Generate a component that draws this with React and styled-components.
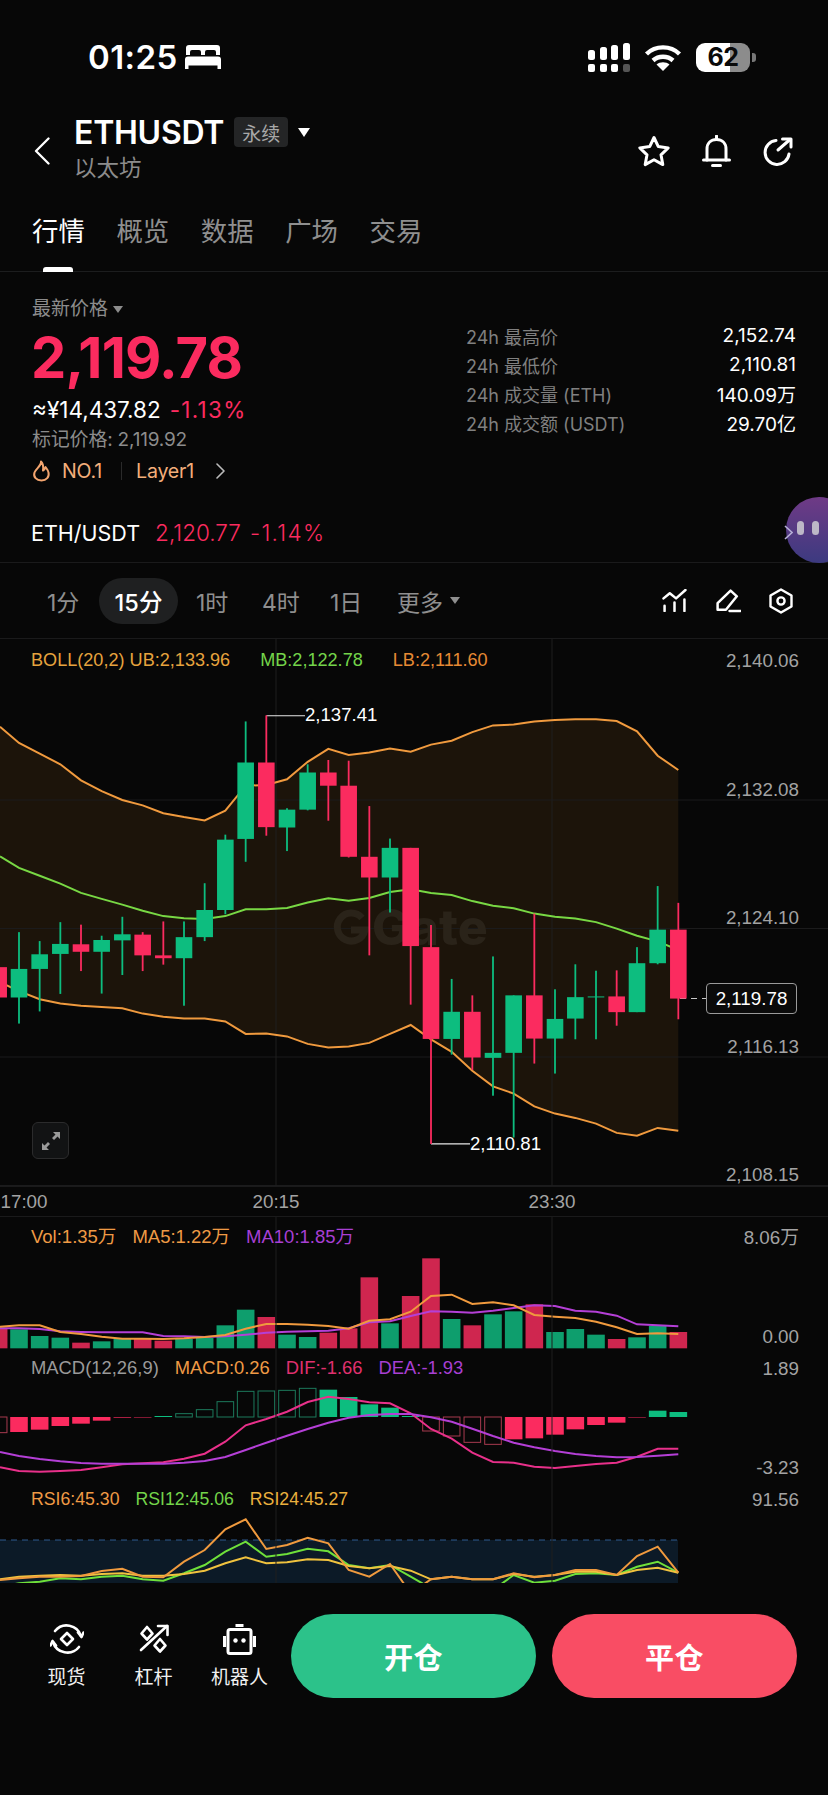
import React from 'react';
import styled, { createGlobalStyle } from 'styled-components';

const UI = `Inter, "Noto Sans CJK SC", sans-serif`;
const CHART = `"Liberation Sans", "Noto Sans CJK SC", sans-serif`;
const RED = '#fb2b5f';
const GREEN = '#0dbd7f';

const Global = createGlobalStyle`
  html, body { margin: 0; padding: 0; background: #070707; }
  * { box-sizing: border-box; }
`;

const Page = styled.div`
  width: 828px; height: 1795px; overflow: hidden; background: #070707; color: #fff;
  font-family: ${UI}; display: flex; flex-direction: column;
`;
const StatusBar = styled.div`
  height: 100px; flex: none; padding: 42px 78px 0 88px;
  display: flex; align-items: flex-start; justify-content: space-between;
`;
const StatusGroup = styled.div`display: flex; align-items: center; gap: ${p => p.$gap}px; height: 30px;`;
const Clock = styled.span`font-size: 33px; font-weight: 600; letter-spacing: 0.4px; line-height: 30px;`;

const NavBar = styled.div`
  height: 100px; flex: none; padding: 0 35px 0 34px; display: flex; align-items: center; gap: 24px;
`;
const BackIcon = styled.svg`width: 16px; height: 28px; flex: none; margin-top: 1px;`;
const TitleBlock = styled.div`flex: 1; display: flex; flex-direction: column; gap: 6px; margin-top: -2px;`;
const TitleRow = styled.div`display: flex; align-items: center; gap: 10px; height: 32px;`;
const Symbol = styled.span`font-size: 32px; font-weight: 600; letter-spacing: -0.25px;`;
const Badge = styled.span`
  width: 54px; height: 30px; background: #242526; border-radius: 4px; color: #a8a8a8;
  font-size: 19px; display: flex; align-items: center; justify-content: center;
`;
const Caret = styled.i`
  width: 0; height: 0; display: block; flex: none;
  border-left: ${p => p.$w / 2}px solid transparent; border-right: ${p => p.$w / 2}px solid transparent;
  border-top: ${p => p.$h}px solid ${p => p.$c};
`;
const Sub = styled.span`font-size: 22.5px; color: #8c8c8c; line-height: 28px;`;
const NavIcons = styled.div`display: flex; align-items: center; gap: 31px; margin-top: 2px;`;

const Tabs = styled.div`
  height: 72px; flex: none; padding: 0 0 0 32px; display: flex; gap: 32.4px; align-items: flex-start;
  border-bottom: 1px solid #1c1d1e;
`;
const Tab = styled.div`
  position: relative; width: 52px; height: 71px; padding-top: 14px; font-size: 26.4px; line-height: 34px;
  color: ${p => (p.$on ? '#fff' : '#8f8f8f')}; white-space: nowrap;
  ${p => p.$on && `&::after { content: ''; position: absolute; left: 11px; bottom: -1px; width: 30px; height: 5px; border-radius: 3px 3px 0 0; background: #fff; }`}
`;

const Summary = styled.div`
  height: 218px; flex: none; padding: 0 32px 0 32px; display: flex; justify-content: space-between;
`;
const PriceCol = styled.div`display: flex; flex-direction: column; padding-top: 24px;`;
const LastLabel = styled.div`
  display: flex; align-items: center; gap: 5px; font-size: 19px; line-height: 26px; color: #8c8c8c;
`;
const BigPrice = styled.div`
  font-size: 56px; font-weight: 700; line-height: 62px; margin-top: 5px; color: ${RED}; letter-spacing: -0.8px; margin-left: -1px;
`;
const FiatRow = styled.div`
  display: flex; gap: 9px; font-size: 22.5px; line-height: 26px; margin-top: 8px;
`;
const Pct = styled.span`color: ${RED}; letter-spacing: 1.3px; font-weight: ${p => p.$w || 400};`;
const MarkPrice = styled.div`font-size: 19px; line-height: 24px; color: #8c8c8c; margin-top: 5px; letter-spacing: -0.2px;`;
const TagRow = styled.div`
  display: flex; align-items: center; font-size: 19.6px; line-height: 24px; margin-top: 7px; color: #f3ae7a; letter-spacing: -0.2px;
`;
const TagIconGap = styled.span`margin-left: 11px;`;
const TagChevron = styled.span`margin-left: 22px; display: flex;`;
const Divider = styled.i`width: 1px; height: 18px; background: #2a2a2a; margin: 0 14px 0 19px;`;
const Stats = styled.div`width: 330px; padding-top: 49px; display: flex; flex-direction: column;`;
const StatRow = styled.div`
  display: flex; justify-content: space-between; height: 29px; align-items: center; font-size: 19px;
`;
const StatLabel = styled.span`color: #808080; font-size: 18px;`;

const PairRow = styled.div`
  position: relative; height: 73px; flex: none; padding: 13px 31px 0; display: flex; align-items: center; gap: 15px;
  font-size: 21.5px; border-bottom: 1px solid #1a1a1b;
`;
const PairLoss = styled.div`display: flex; gap: 9px; color: ${RED}; font-weight: 300; font-size: 22.5px;`;
const Assist = styled.div`
  position: absolute; left: 786px; top: 7px; width: 66px; height: 66px; border-radius: 50%;
  background: linear-gradient(180deg, #6f3a86 0%, #3c3a80 100%);
  display: flex; gap: 8px; padding: 24px 0 0 11px;
`;
const AssistDot = styled.i`width: 7px; height: 14px; border-radius: 4px; background: #bdb7c7;`;
const AssistChevron = styled.svg`position: absolute; left: 784px; top: 35px; width: 9px; height: 15px;`;

const Intervals = styled.div`
  height: 76px; flex: none; padding: 0 35px 0 47px; display: flex; align-items: center; border-bottom: 1px solid #1a1a1b;
`;
const Interval = styled.div`
  font-size: 23px; color: ${p => (p.$on ? '#fff' : '#8f8f8f')}; width: ${p => p.$w}px; height: 46px; flex: none;
  display: flex; align-items: center; gap: 7px;
  justify-content: ${p => (p.$on ? 'center' : 'flex-start')};
  ${p => p.$on && `background: #1f2021; border-radius: 23px; font-weight: 500; margin-right: 18px; font-size: 23.5px;`}
`;
const ToolIcons = styled.div`margin-left: auto; display: flex; align-items: center; gap: 28px;`;

const Pane = styled.div`position: relative; height: ${p => p.$h}px; flex: none; overflow: hidden;`;
const Canvas = styled.svg`position: absolute; left: 0; top: 0; display: block;`;
const Legend = styled.div`
  position: relative; display: flex; gap: ${p => p.$gap}px; padding: ${p => p.$top}px 0 0 31px;
  font-family: ${CHART}; font-size: ${p => p.$size}px; line-height: 22px; white-space: nowrap;
`;
const LegendItem = styled.span`color: ${p => p.$c};`;
const AxisColumn = styled.div`
  position: absolute; right: 29px; top: ${p => p.$top}px; bottom: ${p => p.$bottom}px;
  display: flex; flex-direction: column; justify-content: space-between; align-items: flex-end;
  font-family: ${CHART}; font-size: 18.8px; line-height: 22px; color: #a3a3a3;
`;
const Callout = styled.span`
  position: absolute; left: ${p => p.$x}px; top: ${p => p.$y}px; font-family: ${CHART}; font-size: 18.6px; line-height: 22px; color: #fff;
`;
const PriceTag = styled.div`
  position: absolute; left: 706px; top: 344px; width: 91px; height: 31px; border: 1px solid #9a9a9a; border-radius: 4px;
  background: #0a0a0a; font-family: ${CHART}; font-size: 18.8px; display: flex; align-items: center; justify-content: center;
`;
const ExpandBtn = styled.div`
  position: absolute; left: 32px; top: 483px; width: 37px; height: 37px; border: 1.5px solid #2b2b2c; border-radius: 6px;
  background: #121314; display: flex; align-items: center; justify-content: center;
`;
const TimeAxis = styled.div`
  position: relative; height: 31px; flex: none; border-top: 1px solid #1a1a1b; border-bottom: 1px solid #1a1a1b;
  font-family: ${CHART}; font-size: 18.8px; color: #a3a3a3;
`;
const Tick = styled.span`position: absolute; left: ${p => p.$x}px; top: 4px; line-height: 22px; transform: translateX(-50%);`;

const Footer = styled.div`
  flex: none; height: 212px; padding: 31px 32px 0 0; display: flex; align-items: flex-start; background: #070707; position: relative;
`;
const Shortcut = styled.div`
  width: ${p => p.$w}px; margin-left: ${p => p.$ml}px; flex: none; display: flex; flex-direction: column; align-items: center;
  font-size: 19px; color: #f0f0f0; white-space: nowrap;
`;
const ShortcutIcon = styled.div`height: 50px; display: flex; align-items: center; justify-content: center; margin-bottom: -2px;`;
const Action = styled.div`
  width: ${p => p.$w}px; height: 84px; flex: none; margin-left: ${p => p.$ml}px; border-radius: 42px; background: ${p => p.$bg};
  color: #fff; font-size: 29px; font-weight: 700; display: flex; align-items: center; justify-content: center; letter-spacing: 0.5px;
`;

/* chart data in measured crop units */
const XS = [57,119,181,243,305,367,428,490,552,614,676,737,799,861,923,985,1046,1108,1170,1232,1293,1355,1417,1479,1541,1603,1665,1726,1788,1850,1911,1973,2035];
const CANDLES = [
  [-4,'r',888,973,888,973],[57,'g',893,973,790,1046],[119,'g',852,893,815,1012],[181,'g',823,851,762,963],[243,'r',824,845,769,899],
  [305,'g',812,845,800,962],[367,'g',796,813,747,910],[428,'r',797,855,790,899],[490,'r',855,863,760,881],[552,'g',804,863,760,996],
  [614,'g',728,804,653,815],[676,'g',531,728,517,740],[737,'g',315,529,200,593],[799,'r',315,496,183,520],[861,'g',447,497,443,563],
  [923,'g',343,447,320,449],[985,'r',343,380,308,478],[1046,'r',380,579,310,581],[1108,'r',579,637,437,855],[1170,'g',554,637,528,735],
  [1232,'r',554,829,554,993],[1293,'r',832,1089,770,1383],[1355,'g',1013,1089,921,1133],[1417,'r',1013,1141,967,1176],[1479,'g',1128,1142,858,1248],
  [1541,'g',967,1128,967,1365],[1603,'r',967,1088,738,1158],[1665,'g',1033,1088,950,1186],[1726,'g',972,1032,880,1090],[1788,'g',970,972,898,1090],
  [1850,'r',970,1014,897,1052],[1911,'g',877,1014,832,1014],[1973,'g',783,877,661,880],[2035,'r',783,976,708,1034],
];
const UB = [215,260,290,320,365,395,420,435,457,468,477,450,380,378,362,313,277,294,287,276,285,265,254,230,211,209,200,196,194,194,199,228,296,336];
const MB = [578,610,632,654,680,697,713,730,745,751,753,745,726,726,722,707,695,702,694,678,670,680,686,703,716,723,738,747,752,762,780,800,816,840];
const LB = [930,955,978,990,996,1000,1003,1018,1027,1032,1032,1040,1075,1074,1082,1103,1113,1110,1100,1075,1050,1090,1125,1178,1222,1242,1278,1298,1310,1326,1352,1360,1338,1346];
const LX = [0, ...XS];

const VOL = [[-4,'r',385],[57,'g',388],[119,'g',408],[181,'g',413],[243,'r',428],[305,'g',424],[367,'g',417],[428,'r',415],[490,'r',422],[552,'g',417],[614,'g',414],[676,'g',376],[737,'g',329],[799,'r',351],[861,'g',404],[923,'g',411],[985,'r',398],[1046,'r',385],[1108,'r',232],[1170,'g',370],[1232,'r',288],[1293,'r',175],[1355,'g',357],[1417,'r',376],[1479,'g',343],[1541,'g',334],[1603,'r',313],[1665,'g',396],[1726,'g',387],[1788,'g',404],[1850,'r',417],[1911,'g',412],[1973,'g',378],[2035,'r',396]];
const MA5 = [380,376,376,396,402,410,416,416,417,415,411,405,386,372,372,374,378,386,362,358,335,288,284,312,307,316,345,350,354,365,382,402,400,402];
const MA10 = [385,385,387,394,396,397,397,397,408,409,411,409,404,398,395,394,392,385,367,364,348,334,335,338,332,324,316,318,332,335,347,373,376,379];

const MACD = [[-4,'ro',698],[57,'r',696],[119,'r',689],[181,'r',678],[243,'r',671],[305,'r',662],[367,'r',653],[428,'r',652],[490,'g',648],[552,'go',641],[614,'go',629],[676,'go',605],[737,'go',574],[799,'go',573],[861,'go',571],[923,'go',565],[985,'g',569],[1046,'g',591],[1108,'g',613],[1170,'g',623],[1232,'g',648],[1293,'ro',693],[1355,'ro',708],[1417,'ro',727],[1479,'ro',733],[1541,'r',718],[1603,'r',715],[1665,'r',704],[1726,'r',688],[1788,'r',675],[1850,'r',668],[1911,'r',652],[1973,'g',632],[2035,'g',636]];
const DIF = [802,813,815,813,810,802,793,790,787,776,761,725,676,657,635,606,590,597,607,610,640,687,716,758,786,788,800,804,798,792,788,770,746,746];
const DEA = [756,768,777,784,789,791,791,791,791,788,783,771,750,728,707,687,668,653,645,642,642,652,665,686,708,728,742,753,762,768,772,771,767,763];

const RSI6 = [1140,1135,1130,1130,1128,1113,1106,1130,1132,1085,1050,988,958,1047,1035,1013,1030,1110,1130,1092,1180,1138,1130,1138,1138,1120,1132,1125,1110,1110,1125,1068,1040,1118];
const RSI12 = [1160,1150,1145,1135,1138,1130,1127,1138,1142,1120,1095,1055,1025,1070,1062,1046,1054,1095,1105,1095,1130,1165,1170,1170,1170,1125,1148,1142,1122,1120,1125,1100,1085,1118];
const RSI24 = [1138,1130,1127,1125,1127,1122,1120,1127,1127,1122,1112,1090,1072,1090,1087,1078,1080,1098,1105,1098,1112,1138,1130,1138,1138,1122,1130,1125,1115,1115,1125,1110,1103,1118];

const mainY = v => 11 + v / 2.8;
const px = v => v / 3;
const poly = (ys, mapY) => ys.map((y, i) => `${px(LX[i]).toFixed(1)},${mapY(y).toFixed(1)}`).join(' ');

const MainChart = () => {
  const band = [
    ...UB.map((y, i) => `${px(LX[i]).toFixed(1)},${mainY(y).toFixed(1)}`),
    ...LB.map((y, i) => `${px(LX[i]).toFixed(1)},${mainY(y).toFixed(1)}`).reverse(),
  ].join(' ');
  return (
    <Canvas width="828" height="547" viewBox="0 0 828 547">
      <polygon points={band} fill="#1c140a" />
      {[161, 289.5, 418, 546.5].map(y => <line key={y} x1="0" x2="828" y1={y} y2={y} stroke="#1b1b1c" />)}
      {[276, 552].map(x => <line key={x} x1={x} x2={x} y1="0" y2="547" stroke="#1e1e1e" />)}
      <path d="M362 279 A14 14 0 1 0 365 291 H351" fill="none" stroke="#2a2319" strokeWidth="7" />
      <text x="372" y="306" fill="#2a2319" fontFamily="Inter, sans-serif" fontWeight="800" fontSize="50">Gate</text>
      <polyline points={poly(UB, mainY)} fill="none" stroke="#f09a3e" strokeWidth="2" />
      <polyline points={poly(MB, mainY)} fill="none" stroke="#78d844" strokeWidth="2" />
      <polyline points={poly(LB, mainY)} fill="none" stroke="#f09a3e" strokeWidth="2" />
      <polyline points={`266.3,${mainY(183)+0.4} 305,${mainY(183)+0.4}`} fill="none" stroke="#e8e8e8" strokeWidth="1.2" />
      <polyline points={`431,${mainY(1383)} 470,${mainY(1383)}`} fill="none" stroke="#e8e8e8" strokeWidth="1.2" />
      <line x1="680" x2="706" y1="359.5" y2="359.5" stroke="#c8c8c8" strokeWidth="1.2" strokeDasharray="6 5" />
      {CANDLES.map(([x, c, a, b, t, w]) => {
        const col = c === 'r' ? RED : GREEN;
        return (
          <g key={x} fill={col}>
            <rect x={px(x) - 0.9} width="1.8" y={mainY(t)} height={mainY(w) - mainY(t)} />
            <rect x={px(x) - 8.3} width="16.6" y={mainY(a)} height={Math.max(mainY(b) - mainY(a), 1)} />
          </g>
        );
      })}
    </Canvas>
  );
};

const lowY = v => v / 3;
const LowerChart = () => (
  <Canvas width="828" height="366" viewBox="0 0 828 366">
    <g transform="translate(0,-17)">
      {VOL.map(([x, c, t]) => (
        <rect key={x} x={px(x) - 8.8} width="17.6" y={lowY(t)} height={lowY(445) - lowY(t)} fill={c === 'r' ? '#cf264f' : '#0e9e6d'} />
      ))}
      <polyline points={poly(MA10, lowY)} fill="none" stroke="#b43fd6" strokeWidth="2" />
      <polyline points={poly(MA5, lowY)} fill="none" stroke="#f09a3e" strokeWidth="2" />
      {MACD.map(([x, c, v]) => {
        const col = c[0] === 'r' ? RED : GREEN;
        const y0 = Math.min(lowY(v), lowY(651));
        const h = Math.abs(lowY(v) - lowY(651));
        return c[1] === 'o'
          ? <rect key={x} x={px(x) - 8.3} width="16.6" y={y0} height={h} fill="none" stroke={c[0] === 'r' ? '#a83a4f' : '#1c7a5c'} strokeWidth="1" />
          : <rect key={x} x={px(x) - 8.8} width="17.6" y={y0} height={Math.max(h, 0.5)} fill={col} />;
      })}
      <polyline points={poly(DIF, lowY)} fill="none" stroke="#e8308a" strokeWidth="2" />
      <polyline points={poly(DEA, lowY)} fill="none" stroke="#b43fd6" strokeWidth="2" />
      <rect x="0" y={lowY(1020)} width="678" height={lowY(1150) - lowY(1020)} fill="#0c1a27" />
      <line x1="0" x2="678" y1={lowY(1020)} y2={lowY(1020)} stroke="#2f5a8f" strokeWidth="1.2" strokeDasharray="6 5" />
      <svg x="0" y="0" width="828" height={lowY(1150)} viewBox={`0 0 828 ${lowY(1150)}`}>
        <polyline points={poly(RSI12, lowY)} fill="none" stroke="#6fe03a" strokeWidth="2" />
        <polyline points={poly(RSI24, lowY)} fill="none" stroke="#f0c23e" strokeWidth="2" />
        <polyline points={poly(RSI6, lowY)} fill="none" stroke="#f09a3e" strokeWidth="2" />
      </svg>
      {[276, 552].map(x => <line key={x} x1={x} x2={x} y1="17" y2="383" stroke="#1e1e1e" />)}
    </g>
  </Canvas>
);

const Ico = ({ w, h, vb, sw = 2, children, fill = 'none', stroke = '#fff' }) => (
  <svg width={w} height={h} viewBox={vb || `0 0 ${w} ${h}`} fill={fill} stroke={stroke} strokeWidth={sw} strokeLinecap="round" strokeLinejoin="round" style={{ display: 'block' }}>
    {children}
  </svg>
);

const Signal = () => (
  <svg width="42" height="29" viewBox="0 0 42 29" style={{ display: 'block' }}>
    {[[0, 10], [12, 13], [23, 15], [35, 17]].map(([x, h]) => <rect key={x} x={x} y={17 - h} width="7" height={h} rx="2.5" fill="#fff" />)}
    {[0, 12, 23].map(x => <rect key={x} x={x} y="21" width="7" height="8" rx="2" fill="#fff" />)}
    <rect x="35" y="21" width="7" height="8" rx="2" fill="#555" />
  </svg>
);
const Wifi = () => (
  <svg width="38" height="27" viewBox="0 0 38 27" fill="none" stroke="#fff" strokeWidth="4.4" style={{ display: 'block' }}>
    <path d="M2.5 10 C11.5 1.2 26.5 1.2 35.5 10" />
    <path d="M9 16.5 C14.5 11.5 23.5 11.5 29 16.5" />
    <path d="M19 27 L12.5 20.5 C16 17.5 22 17.5 25.5 20.5 Z" fill="#fff" stroke="none" />
  </svg>
);
const Battery = styled.div`
  position: relative; width: 54px; height: 29px; border-radius: 9px; overflow: visible;
  background: linear-gradient(90deg, #fff 0 63%, #8c8c8c 63% 100%);
  color: #0a0a0a; font-size: 25px; font-weight: 700; display: flex; align-items: center; justify-content: center;
  letter-spacing: -0.5px;
  &::after { content: ''; position: absolute; left: 56px; top: 10px; width: 4px; height: 9px; border-radius: 0 3px 3px 0; background: #777; }
`;

const App = () => (
  <Page>
    <Global />
    <StatusBar>
      <StatusGroup $gap={7}>
        <Clock>01:25</Clock>
        <svg width="36" height="24" viewBox="0 0 36 24" fill="#fff" style={{ display: 'block' }}>
          <path d="M4 0 H32 A3 3 0 0 1 35 3 V10 H31 V7 A2 2 0 0 0 29 5 H22 A2 2 0 0 0 20 7 V10 H16 V7 A2 2 0 0 0 14 5 H7 A2 2 0 0 0 5 7 V10 H1 V3 A3 3 0 0 1 4 0 Z" />
          <path d="M3 11.5 H33 A3 3 0 0 1 36 14.5 V24 H32.5 V20.5 H3.5 V24 H0 V14.5 A3 3 0 0 1 3 11.5 Z" />
        </svg>
      </StatusGroup>
      <StatusGroup $gap={14}>
        <Signal />
        <Wifi />
        <Battery>62</Battery>
      </StatusGroup>
    </StatusBar>

    <NavBar>
      <BackIcon viewBox="0 0 16 28" fill="none" stroke="#fff" strokeWidth="2.3" strokeLinecap="round" strokeLinejoin="round">
        <path d="M14.5 1.5 L2 14 L14.5 26.5" />
      </BackIcon>
      <TitleBlock>
        <TitleRow>
          <Symbol>ETHUSDT</Symbol>
          <Badge>永续</Badge>
          <Caret $w={13} $h={9} $c="#fff" />
        </TitleRow>
        <Sub>以太坊</Sub>
      </TitleBlock>
      <NavIcons>
        <Ico w={34} h={32} vb="0 0 34 32" sw={3}>
          <path d="M17 2.5 L21.3 11.6 L31.2 12.9 L24 19.8 L25.8 29.6 L17 24.8 L8.2 29.6 L10 19.8 L2.8 12.9 L12.7 11.6 Z" />
        </Ico>
        <Ico w={29} h={32} vb="0 0 29 32" sw={3}>
          <path d="M14.5 1 V4" />
          <path d="M5 25 V14 C5 8 9 4.5 14.5 4.5 C20 4.5 24 8 24 14 V25" />
          <path d="M1.5 25 H27.5" />
          <path d="M10.5 30.5 H18.5" />
        </Ico>
        <Ico w={31} h={29} vb="0 0 31 29" sw={3}>
          <path d="M14 3.5 A12 12 0 1 0 27 17" />
          <path d="M16 13 L28 2.5" />
          <path d="M20.5 2 H29 V10" />
        </Ico>
      </NavIcons>
    </NavBar>

    <Tabs>
      <Tab $on>行情</Tab>
      <Tab>概览</Tab>
      <Tab>数据</Tab>
      <Tab>广场</Tab>
      <Tab>交易</Tab>
    </Tabs>

    <Summary>
      <PriceCol>
        <LastLabel>最新价格<Caret $w={11} $h={7} $c="#8c8c8c" /></LastLabel>
        <BigPrice>2,119.78</BigPrice>
        <FiatRow><span>≈¥14,437.82</span><Pct>-1.13%</Pct></FiatRow>
        <MarkPrice>标记价格: 2,119.92</MarkPrice>
        <TagRow>
          <Ico w={19} h={22} vb="0 0 19 22" sw={2} stroke="#f3a56f">
            <path d="M9 1.5 C9.5 6 4 8.5 2.5 12.5 C1 17 4.5 20.5 9.5 20.5 C14.5 20.5 17.5 17 16.5 12.5 C16 10 14.5 8.5 13.5 7 C13 9 12 10 11 10.5 C11.5 7 11 3.5 9 1.5 Z" />
          </Ico>
          <TagIconGap>NO.1</TagIconGap>
          <Divider />
          <span>Layer1</span>
          <TagChevron>
            <Ico w={9} h={16} vb="0 0 9 16" sw={1.6} stroke="#bbb"><path d="M1 1 L8 8 L1 15" /></Ico>
          </TagChevron>
        </TagRow>
      </PriceCol>
      <Stats>
        <StatRow><StatLabel>24h 最高价</StatLabel><span>2,152.74</span></StatRow>
        <StatRow><StatLabel>24h 最低价</StatLabel><span>2,110.81</span></StatRow>
        <StatRow><StatLabel>24h 成交量 (ETH)</StatLabel><span>140.09万</span></StatRow>
        <StatRow><StatLabel>24h 成交额 (USDT)</StatLabel><span>29.70亿</span></StatRow>
      </Stats>
    </Summary>

    <PairRow>
      <span>ETH/USDT</span>
      <PairLoss><span>2,120.77</span><Pct $w={300}>-1.14%</Pct></PairLoss>
      <Assist><AssistDot /><AssistDot /></Assist>
      <AssistChevron viewBox="0 0 9 15" fill="none" stroke="#b6aed6" strokeWidth="1.6"><path d="M1 1 L8 7.5 L1 14" /></AssistChevron>
    </PairRow>

    <Intervals>
      <Interval $w={52}>1分</Interval>
      <Interval $w={79} $on>15分</Interval>
      <Interval $w={66}>1时</Interval>
      <Interval $w={68}>4时</Interval>
      <Interval $w={67}>1日</Interval>
      <Interval $w={64}>更多<Caret $w={10} $h={7} $c="#8f8f8f" /></Interval>
      <ToolIcons>
        <Ico w={25} h={23} vb="0 0 23 22" sw={2.4}>
          <path d="M1 9 L7 4 L13 9 L22 1" />
          <path d="M2 16 V21 M11.5 13 V21 M21 10 V21" />
        </Ico>
        <Ico w={26} h={24} vb="0 0 25 23" sw={2.4}>
          <path d="M15 1.5 L21 7 L10.5 20 H2.5 V13.5 Z" />
          <path d="M14 21 H24.5" />
        </Ico>
        <Ico w={24} h={26} vb="0 0 24 26" sw={2.4}>
          <path d="M12 1.5 L22.5 7.5 V18.5 L12 24.5 L1.5 18.5 V7.5 Z" />
          <circle cx="12" cy="13" r="3.6" />
        </Ico>
      </ToolIcons>
    </Intervals>

    <Pane $h={547}>
      <MainChart />
      <Legend $gap={30} $top={10} $size={18.1}>
        <LegendItem $c="#e6a33e">BOLL(20,2) UB:2,133.96</LegendItem>
        <LegendItem $c="#74d44a">MB:2,122.78</LegendItem>
        <LegendItem $c="#e68a34">LB:2,111.60</LegendItem>
      </Legend>
      <AxisColumn $top={11} $bottom={0}>
        <span>2,140.06</span><span>2,132.08</span><span>2,124.10</span><span>2,116.13</span><span>2,108.15</span>
      </AxisColumn>
      <Callout $x={305} $y={65}>2,137.41</Callout>
      <Callout $x={470} $y={494}>2,110.81</Callout>
      <PriceTag>2,119.78</PriceTag>
      <ExpandBtn>
        <svg width="20" height="20" viewBox="0 0 20 20" fill="#9a9a9a" style={{ display: 'block' }}>
          <path d="M12 1 H19 V8 L16.5 5.5 L13 9 L11 7 L14.5 3.5 Z" />
          <path d="M8 19 H1 V12 L3.5 14.5 L7 11 L9 13 L5.5 16.5 Z" />
        </svg>
      </ExpandBtn>
    </Pane>

    <TimeAxis>
      <Tick $x={24}>17:00</Tick>
      <Tick $x={276}>20:15</Tick>
      <Tick $x={552}>23:30</Tick>
    </TimeAxis>

    <Pane $h={366}>
      <LowerChart />
      <Legend $gap={16} $top={9} $size={18.5}>
        <LegendItem $c="#ef9a45">Vol:1.35万</LegendItem>
        <LegendItem $c="#ef9a45">MA5:1.22万</LegendItem>
        <LegendItem $c="#a83fd4">MA10:1.85万</LegendItem>
      </Legend>
      <Legend $gap={16} $top={109} $size={18.4}>
        <LegendItem $c="#9a9a9a">MACD(12,26,9)</LegendItem>
        <LegendItem $c="#ef9a45">MACD:0.26</LegendItem>
        <LegendItem $c="#e0306f">DIF:-1.66</LegendItem>
        <LegendItem $c="#a83fd4">DEA:-1.93</LegendItem>
      </Legend>
      <Legend $gap={16} $top={109} $size={17.7}>
        <LegendItem $c="#ef9a45">RSI6:45.30</LegendItem>
        <LegendItem $c="#74d44a">RSI12:45.06</LegendItem>
        <LegendItem $c="#eab03e">RSI24:45.27</LegendItem>
      </Legend>
      <AxisColumn $top={10} $bottom={235}>
        <span>8.06万</span><span>0.00</span>
      </AxisColumn>
      <AxisColumn $top={141} $bottom={104}>
        <span>1.89</span><span>-3.23</span>
      </AxisColumn>
      <AxisColumn $top={272} $bottom={72}>
        <span>91.56</span>
      </AxisColumn>
    </Pane>

    <Footer>
      <Shortcut $w={37} $ml={48}>
        <ShortcutIcon>
          <Ico w={34} h={34} vb="0 0 34 34" sw={2.6}>
            <path d="M5 9 A15 15 0 0 1 31 14" />
            <path d="M29 25 A15 15 0 0 1 3 20" />
            <path d="M28 10.5 L31.5 15 L33.5 10.5 M6 23.5 L2.5 19 L0.5 23.5" />
            <path d="M17 11 L23 17 L17 23 L11 17 Z" />
          </Ico>
        </ShortcutIcon>
        现货
      </Shortcut>
      <Shortcut $w={37} $ml={50}>
        <ShortcutIcon>
          <Ico w={30} h={30} vb="0 0 30 30" sw={2.6}>
            <path d="M2 26 L28 2" />
            <path d="M19 2 H28.5 V11" />
            <path d="M8 3 L13.5 9.5 L8 15.5 L2.5 9.5 Z" />
            <path d="M21 15 L26.5 21.5 L21 27.5 L15.5 21.5 Z" />
          </Ico>
        </ShortcutIcon>
        杠杆
      </Shortcut>
      <Shortcut $w={57} $ml={39}>
        <ShortcutIcon>
          <svg width="33" height="31" viewBox="0 0 33 31" fill="none" style={{ display: 'block' }}>
            <rect x="12.5" y="0" width="8" height="3" fill="#fff" />
            <rect x="5" y="5.5" width="23" height="24" rx="2" stroke="#fff" strokeWidth="3" />
            <rect x="0" y="12" width="3" height="11" fill="#fff" />
            <rect x="30" y="12" width="3" height="11" fill="#fff" />
            <circle cx="12.5" cy="16.5" r="2.2" fill="#fff" />
            <circle cx="20.5" cy="16.5" r="2.2" fill="#fff" />
          </svg>
        </ShortcutIcon>
        机器人
      </Shortcut>
      <Action $w={245} $ml={23} $bg="#2cc28a">开仓</Action>
      <Action $w={245} $ml={16} $bg="#f94d64">平仓</Action>
    </Footer>
  </Page>
);

export default App;
